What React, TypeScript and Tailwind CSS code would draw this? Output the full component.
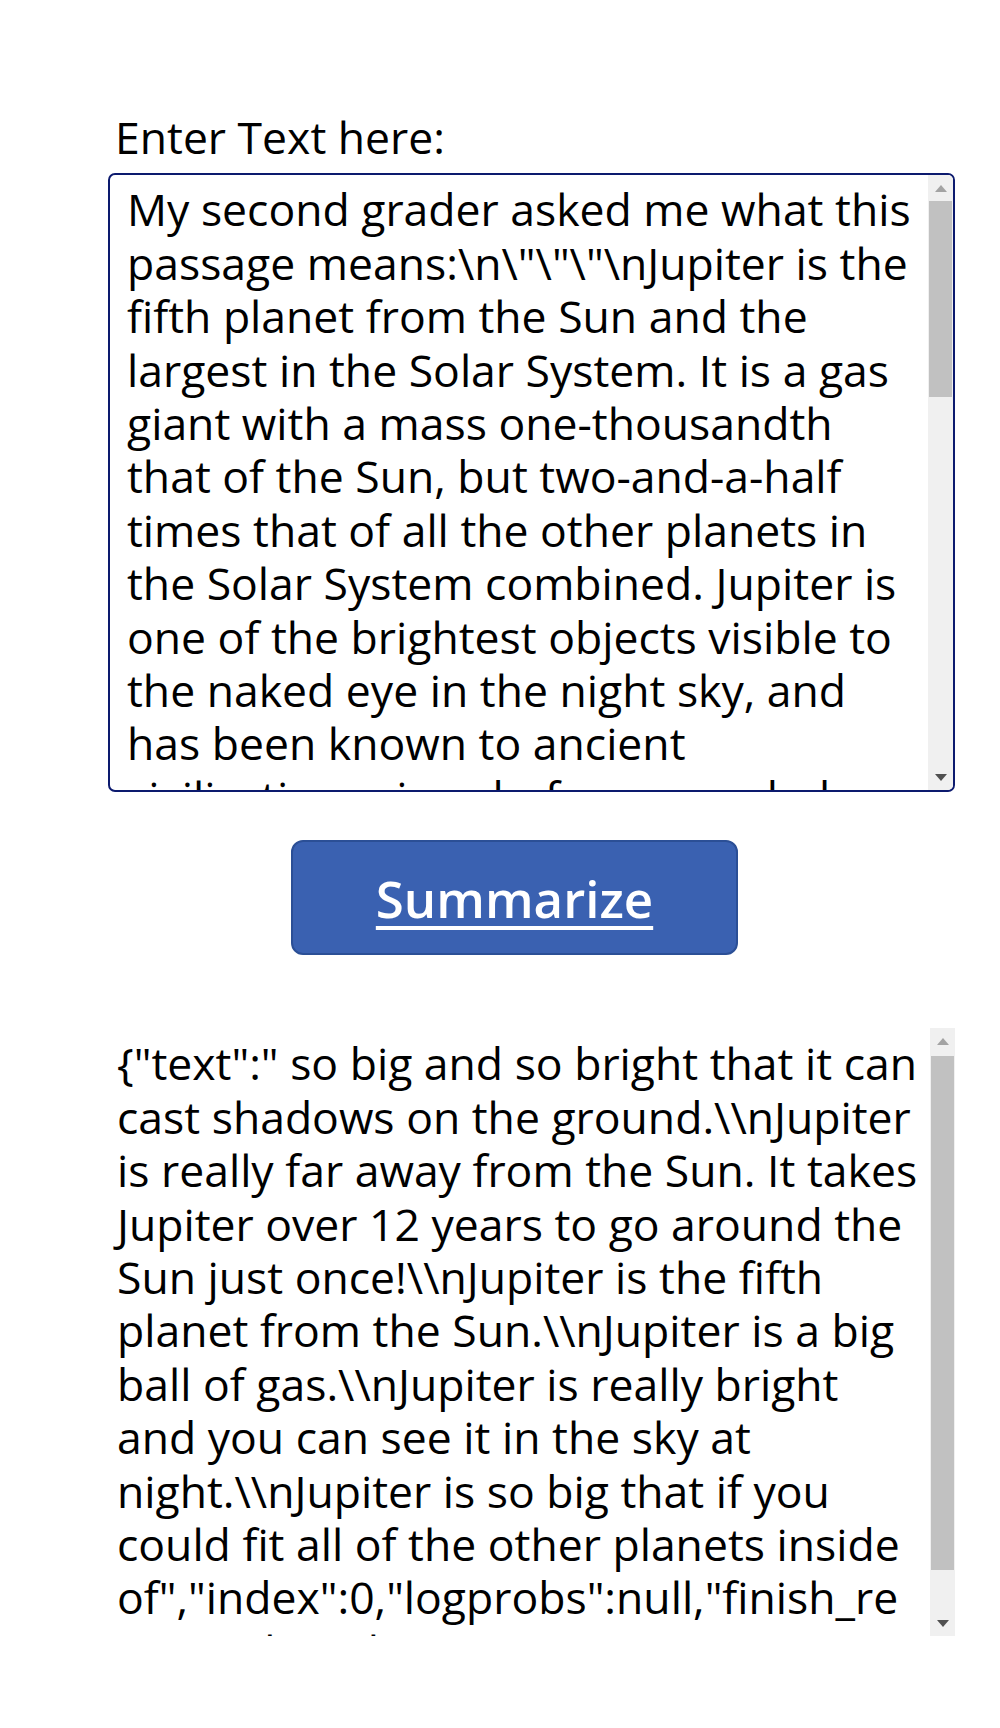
import { useState } from 'react'

const PROMPT =
  'My second grader asked me what this passage means:\\n\\"\\"\\"\\nJupiter is the fifth planet from the Sun and the largest in the Solar System. It is a gas giant with a mass one-thousandth that of the Sun, but two-and-a-half times that of all the other planets in the Solar System combined. Jupiter is one of the brightest objects visible to the naked eye in the night sky, and has been known to ancient civilizations since before recorded history. It is named after the Roman god Jupiter.'

const RESULT =
  '{"text":" so big and so bright that it can cast shadows on the ground.\\\\nJupiter is really far away from the Sun. It takes Jupiter over 12 years to go around the Sun just once!\\\\nJupiter is the fifth planet from the Sun.\\\\nJupiter is a big ball of gas.\\\\nJupiter is really bright and you can see it in the sky at night.\\\\nJupiter is so big that if you could fit all of the other planets inside of","index":0,"logprobs":null,"finish_reason":"length"}'

// classic windows-style scrollbar, drawn so it has the same width as the shot
function Scrollbar({ before, thumb }: { before: number; thumb: number }) {
  return (
    <div className="flex w-[25px] shrink-0 flex-col bg-[#f0f0f0]">
      <div className="flex h-[26px] items-center justify-center">
        <svg width="12" height="7" viewBox="0 0 12 7">
          <path d="M6 0 L12 7 L0 7 Z" fill="#a3a3a3" />
        </svg>
      </div>
      <div className="flex-1">
        <div style={{ height: before }} />
        <div className="mx-[1px] bg-[#c1c1c1]" style={{ height: thumb }} />
      </div>
      <div className="flex h-[26px] items-center justify-center">
        <svg width="12" height="7" viewBox="0 0 12 7">
          <path d="M0 0 L12 0 L6 7 Z" fill="#505050" />
        </svg>
      </div>
    </div>
  )
}

export default function App() {
  const [text, setText] = useState(PROMPT)

  return (
    <div className="min-h-[1728px] bg-white font-['Open_Sans',sans-serif] text-black">
      <div className="ml-[108px] w-[847px] pt-[110px]">
        <label className="block pl-[7px] text-[44.5px] leading-[53.4px]">Enter Text here:</label>

        <div className="mt-[10px] flex h-[619px] overflow-hidden rounded-[7px] border-2 border-[#0c1a6e]">
          <textarea
            value={text}
            onChange={e => setText(e.target.value)}
            className="min-w-0 flex-1 resize-none overflow-hidden pt-[7px] pl-[17px] pr-[4px] text-[44.5px] leading-[53.4px] outline-none"
          />
          <Scrollbar before={0} thumb={196} />
        </div>

        <div className="mt-[48px] ml-[183px]">
          <button className="h-[115px] w-[447px] rounded-[12px] border-2 border-[#2b4f96] bg-[#3a61b1] text-[51px] font-semibold text-white underline decoration-[4px] underline-offset-[8px]">
            Summarize
          </button>
        </div>

        <div className="mt-[73px] flex h-[608px] overflow-hidden">
          <div className="min-w-0 flex-1 pt-[8px] pl-[9px] pr-[8px] text-[44.5px] leading-[53.4px] break-words">
            {RESULT}
          </div>
          <Scrollbar before={2} thumb={514} />
        </div>
      </div>
    </div>
  )
}
